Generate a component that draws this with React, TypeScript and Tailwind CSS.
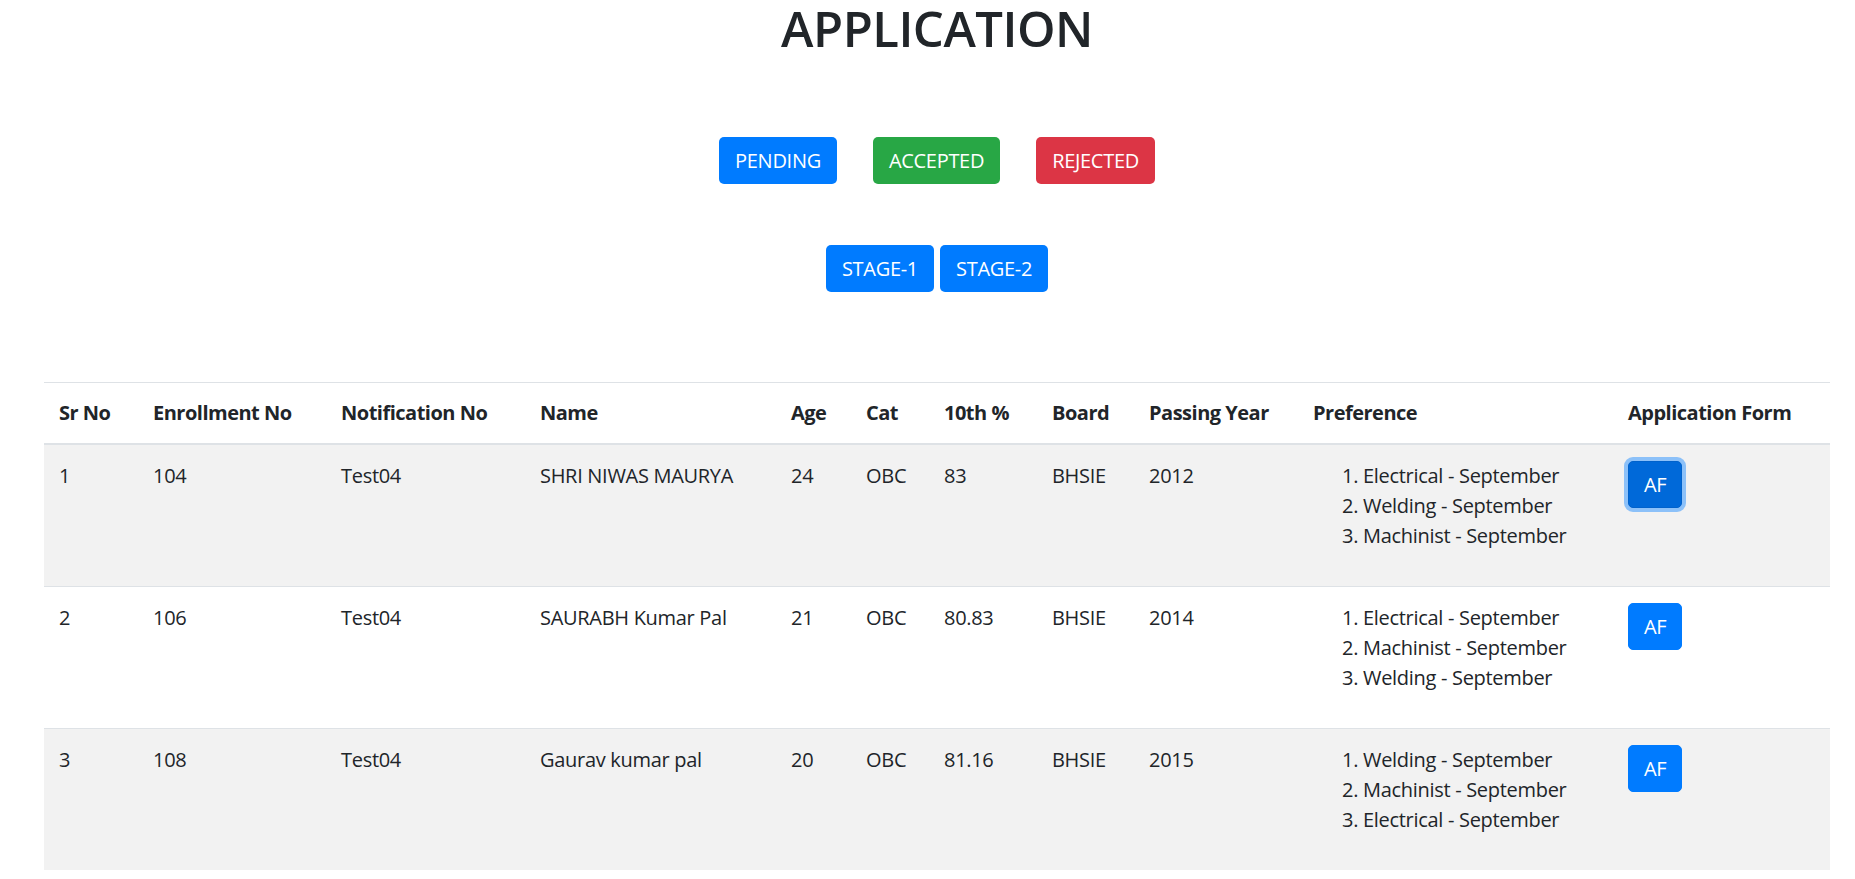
import React from "react";

type Row = {
  sr: number;
  enrollment: string;
  notification: string;
  name: string;
  age: number;
  cat: string;
  percent: string;
  board: string;
  year: string;
  preferences: string[];
  focused?: boolean;
};

const rows: Row[] = [
  {
    sr: 1,
    enrollment: "104",
    notification: "Test04",
    name: "SHRI NIWAS MAURYA",
    age: 24,
    cat: "OBC",
    percent: "83",
    board: "BHSIE",
    year: "2012",
    preferences: ["Electrical - September", "Welding - September", "Machinist - September"],
    focused: true,
  },
  {
    sr: 2,
    enrollment: "106",
    notification: "Test04",
    name: "SAURABH Kumar Pal",
    age: 21,
    cat: "OBC",
    percent: "80.83",
    board: "BHSIE",
    year: "2014",
    preferences: ["Electrical - September", "Machinist - September", "Welding - September"],
  },
  {
    sr: 3,
    enrollment: "108",
    notification: "Test04",
    name: "Gaurav kumar pal",
    age: 20,
    cat: "OBC",
    percent: "81.16",
    board: "BHSIE",
    year: "2015",
    preferences: ["Welding - September", "Machinist - September", "Electrical - September"],
  },
];

const headers = [
  { label: "Sr No", w: "w-[94px]" },
  { label: "Enrollment No", w: "w-[188px]" },
  { label: "Notification No", w: "w-[199px]" },
  { label: "Name", w: "w-[251px]" },
  { label: "Age", w: "w-[75px]" },
  { label: "Cat", w: "w-[78px]" },
  { label: "10th %", w: "w-[108px]" },
  { label: "Board", w: "w-[97px]" },
  { label: "Passing Year", w: "w-[164px]" },
  { label: "Preference", w: "w-[315px]" },
  { label: "Application Form", w: "w-[217px]" },
];

function Btn({ children, color }: { children: React.ReactNode; color: string }) {
  return (
    <button className={`${color} text-white text-[20px] leading-[30px] tracking-[-0.3px] px-[15px] py-[7.5px] rounded-[5px] border border-transparent`}>
      {children}
    </button>
  );
}

export default function App() {
  return (
    <div className="min-h-screen bg-white text-[#212529] font-['Open_Sans',sans-serif] pl-[19px]">
      <h1 className="text-center text-[49px] leading-[56px] font-semibold tracking-[-0.5px]">APPLICATION</h1>

      <div className="flex justify-center gap-[36px] mt-[81px]">
        <Btn color="bg-[#007bff]">PENDING</Btn>
        <Btn color="bg-[#28a745]">ACCEPTED</Btn>
        <Btn color="bg-[#dc3545]">REJECTED</Btn>
      </div>

      <div className="flex justify-center gap-[6px] mt-[61px]">
        <Btn color="bg-[#007bff]">STAGE-1</Btn>
        <Btn color="bg-[#007bff]">STAGE-2</Btn>
      </div>

      <table className="table-fixed border-collapse ml-[25px] w-[1786px] mt-[90px] text-[20px] leading-[30px] tracking-[-0.3px]">
        <thead>
          <tr>
            {headers.map((h) => (
              <th
                key={h.label}
                className={`${h.w} text-left font-bold tracking-[-0.5px] p-[15px] border-t border-[#dee2e6] border-b-2 align-bottom`}
              >
                {h.label}
              </th>
            ))}
          </tr>
        </thead>
        <tbody>
          {rows.map((r, i) => (
            <tr key={r.sr} className={i % 2 === 0 ? "bg-[#f2f2f2]" : "bg-white"}>
              <td className="p-[15px] pt-[16px] align-top border-t border-[#dee2e6]">{r.sr}</td>
              <td className="p-[15px] pt-[16px] align-top border-t border-[#dee2e6]">{r.enrollment}</td>
              <td className="p-[15px] pt-[16px] align-top border-t border-[#dee2e6]">{r.notification}</td>
              <td className="p-[15px] pt-[16px] align-top border-t border-[#dee2e6]">{r.name}</td>
              <td className="p-[15px] pt-[16px] align-top border-t border-[#dee2e6]">{r.age}</td>
              <td className="p-[15px] pt-[16px] align-top border-t border-[#dee2e6]">{r.cat}</td>
              <td className="p-[15px] pt-[16px] align-top border-t border-[#dee2e6]">{r.percent}</td>
              <td className="p-[15px] pt-[16px] align-top border-t border-[#dee2e6]">{r.board}</td>
              <td className="p-[15px] pt-[16px] align-top border-t border-[#dee2e6]">{r.year}</td>
              <td className="p-[15px] pt-[16px] align-top border-t border-[#dee2e6]">
                <ol className="list-decimal pl-[50px] mb-[20px]">
                  {r.preferences.map((p) => (
                    <li key={p}>{p}</li>
                  ))}
                </ol>
              </td>
              <td className="p-[15px] pt-[16px] align-top border-t border-[#dee2e6]">
                <button
                  className={`text-white text-[20px] leading-[30px] px-[15px] py-[7.5px] rounded-[5px] border ${
                    r.focused
                      ? "bg-[#0069d9] border-[#0062cc] shadow-[0_0_0_4px_rgba(38,143,255,0.5)]"
                      : "bg-[#007bff] border-[#007bff]"
                  }`}
                >
                  AF
                </button>
              </td>
            </tr>
          ))}
        </tbody>
      </table>
    </div>
  );
}
